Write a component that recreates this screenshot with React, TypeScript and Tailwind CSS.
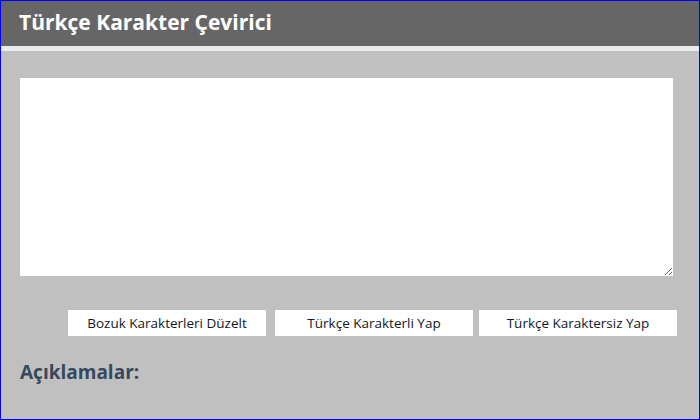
const buttons = ["Bozuk Karakterleri Düzelt", "Türkçe Karakterli Yap", "Türkçe Karaktersiz Yap"];

export default function App() {
  return (
    <div className="w-[700px] h-[420px] border border-[#0000ff] bg-[#c0c0c0] overflow-hidden font-['Open_Sans',sans-serif]">
      <header className="h-[45px] bg-[#666666] border-b-[5px] border-[#e9ecec] box-content flex items-center px-[18px]">
        <h1 className="text-white font-bold text-[21px] leading-none -mt-[2px]">Türkçe Karakter Çevirici</h1>
      </header>
      <main className="px-[19px] pt-[27px]">
        <textarea className="block w-[653px] h-[198px] bg-white outline-none border-0 resize" />
        <div className="flex mt-[34px] pl-[48px]">
          {buttons.map((b, i) => (
            <button
              key={b}
              className={`w-[198px] h-[26px] bg-white text-[13.5px] text-[#111827] ${i === 1 ? "ml-[9px]" : i === 2 ? "ml-[6px]" : ""}`}
            >
              {b}
            </button>
          ))}
        </div>
        <h2 className="mt-[27px] text-[19px] font-bold text-[#34495e] leading-none">Açıklamalar:</h2>
      </main>
    </div>
  );
}
